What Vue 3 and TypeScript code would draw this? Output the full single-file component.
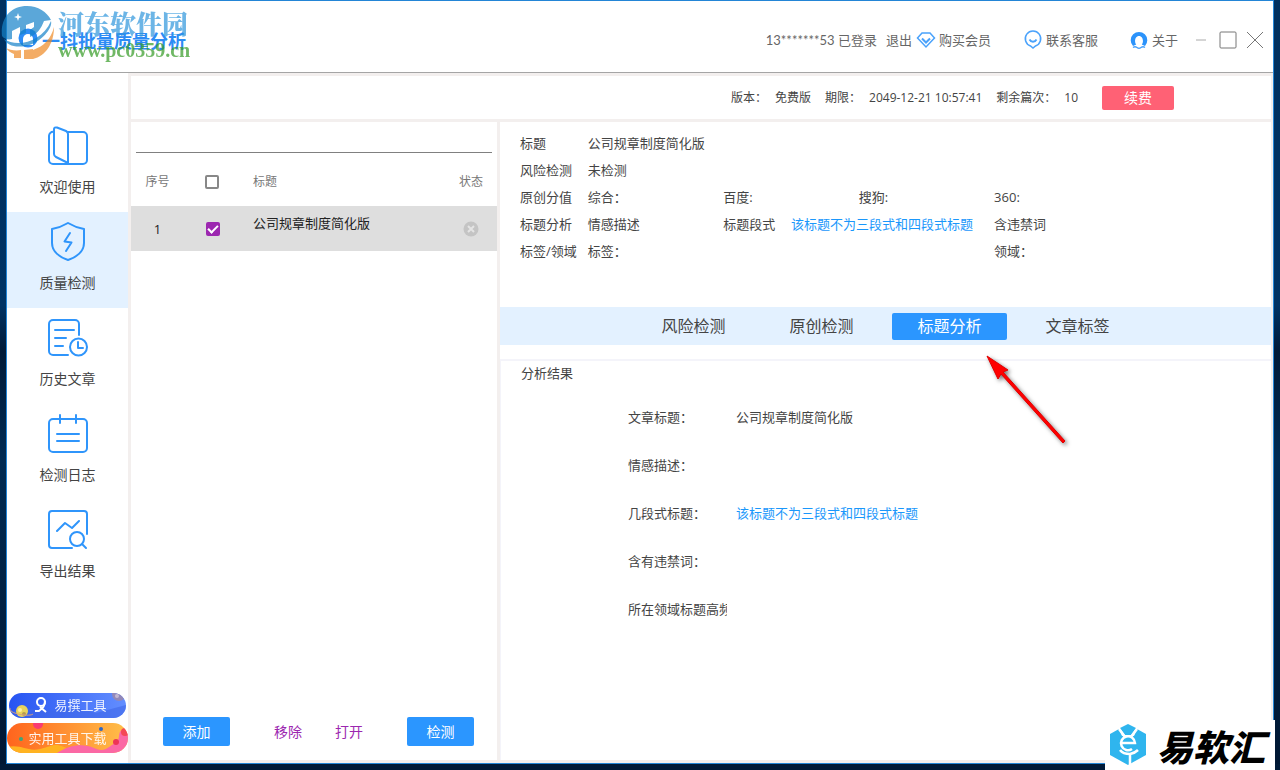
<script setup lang="ts">
import { ref } from 'vue'

interface NavItem { id: string; label: string }
interface Article { id: number; title: string; checked: boolean }
interface Field { text: string; col: number; span: number; row: number; accent?: boolean }
interface Result { label: string; value: string; accent?: boolean }

const nav: NavItem[] = [
  { id: 'welcome', label: '欢迎使用' },
  { id: 'quality', label: '质量检测' },
  { id: 'history', label: '历史文章' },
  { id: 'log', label: '检测日志' },
  { id: 'export', label: '导出结果' },
]
const activeNav = ref('quality')

const keyword = ref('')
const allChecked = ref(false)
const articles = ref<Article[]>([{ id: 1, title: '公司规章制度简化版', checked: true }])

const fields: Field[] = [
  { row: 1, col: 1, span: 1, text: '标题' },
  { row: 1, col: 2, span: 4, text: '公司规章制度简化版' },
  { row: 2, col: 1, span: 1, text: '风险检测' },
  { row: 2, col: 2, span: 4, text: '未检测' },
  { row: 3, col: 1, span: 1, text: '原创分值' },
  { row: 3, col: 2, span: 2, text: '综合：' },
  { row: 3, col: 4, span: 2, text: '百度:' },
  { row: 3, col: 6, span: 2, text: '搜狗:' },
  { row: 3, col: 8, span: 2, text: '360:' },
  { row: 4, col: 1, span: 1, text: '标题分析' },
  { row: 4, col: 2, span: 2, text: '情感描述' },
  { row: 4, col: 4, span: 1, text: '标题段式' },
  { row: 4, col: 5, span: 3, text: '该标题不为三段式和四段式标题', accent: true },
  { row: 4, col: 8, span: 2, text: '含违禁词' },
  { row: 5, col: 1, span: 1, text: '标签/领域' },
  { row: 5, col: 2, span: 2, text: '标签：' },
  { row: 5, col: 8, span: 2, text: '领域：' },
]

const tabs = ['风险检测', '原创检测', '标题分析', '文章标签']
const activeTab = ref('标题分析')

const results: Result[] = [
  { label: '文章标题：', value: '公司规章制度简化版' },
  { label: '情感描述：', value: '' },
  { label: '几段式标题：', value: '该标题不为三段式和四段式标题', accent: true },
  { label: '含有违禁词：', value: '' },
  { label: '所在领域标题高频词：', value: '' },
]
</script>

<template>
  <div class="desktop">
    <div class="window">
      <header class="titlebar">
        <div class="brand">
          <svg class="brand-face" viewBox="0 0 22 22" aria-hidden="true">
            <circle cx="11" cy="10" r="9.5" fill="#2d8cf5" />
            <path d="M6 17v-6a5 5 0 0 1 10 0v6z" fill="#fff" />
          </svg>
          <span class="brand-name">一抖批量质量分析</span>
          <div class="watermark">
            <svg class="wm-logo" viewBox="0 0 54 54" aria-hidden="true">
              <path d="M1 30C-1 12 10 0 26 0c11 0 20 6 24 14l-7 1c-3 8-7 13-14 16v-7l4-3V16l-8 3v8l-6 2v-8l-8 4v8C7 34 3 33 1 30z" fill="#1683c9" />
              <path d="M3 33c13 9 38 3 47-18 2 7-10 22-25 25C13 42 6 39 3 33z" fill="#1683c9" />
              <path d="M53 21c1 15-8 27-21 31v-9l-9 1v9h9c13-3 21-16 21-32zM53 21c-3 12-10 19-21 23v8c12-3 22-15 21-31zM5 42c3 2 10 3 15 2v8h-7v-4c-3-1-6-3-8-6z" fill="#ee8a25" />
              <path d="M17 7l1 3 3 1-3 1-1 3-1-3-3-1 3-1z" fill="#fff" />
            </svg>
            <span class="wm-cn">河东软件园</span>
            <span class="wm-url">www.pc0359.cn</span>
          </div>
        </div>
        <nav class="account">
          <span class="user">13*******53 已登录</span>
          <a href="#" class="logout">退出</a>
          <a href="#" class="link buy">
            <svg viewBox="0 0 20 20" aria-hidden="true"><path d="M6 3h8l4.500 5L10 17 1.500 8z" /><path d="M6 8.500l4 4 4-4" stroke-width="2" /></svg>
            购买会员
          </a>
          <a href="#" class="link service">
            <svg viewBox="0 0 20 20" aria-hidden="true"><path d="M7.500 16A7.700 7.700 0 1 1 12.500 16L10 18z" /><path d="M6.500 9.500c1.500 3 5.500 3 7 0" stroke-width="1.800" /></svg>
            联系客服
          </a>
          <a href="#" class="link about">
            <svg viewBox="0 0 20 20" aria-hidden="true"><path d="M4 16A8.300 8.300 0 1 1 16 16L12.800 14.500C15 12 14 6 10 6S5 12 7.200 14.500z" fill="#2b93fb" stroke="none" /><path d="M4 17.500q2-1.500 4 0t4 0 4 0" /></svg>
            关于
          </a>
        </nav>
        <div class="controls">
          <button type="button" class="ctl" aria-label="最小化"><svg viewBox="0 0 18 18"><path d="M4 9h10" stroke="#aaa" /></svg></button>
          <button type="button" class="ctl" aria-label="最大化"><svg viewBox="0 0 18 18"><rect x="1" y="1" width="16" height="16" rx="1" /></svg></button>
          <button type="button" class="ctl" aria-label="关闭"><svg viewBox="0 0 18 18"><path d="M1 1l16 16M17 1L1 17" /></svg></button>
        </div>
      </header>

      <div class="body">
        <aside class="sidebar">
          <nav class="nav">
            <button
              v-for="item in nav"
              :key="item.id"
              type="button"
              class="nav-item"
              :class="{ active: item.id === activeNav }"
              @click="activeNav = item.id"
            >
              <svg viewBox="0 0 40 40" aria-hidden="true">
                <template v-if="item.id === 'welcome'">
                  <path d="M20 6h15a4 4 0 0 1 4 4v24a4 4 0 0 1-4 4H5a4 4 0 0 1-4-4V10a4 4 0 0 1 5-4" />
                  <path d="M6 3q0-2 3-1.500L18 5q2 1 2 3v29L8 31q-2-1-2-3z" />
                </template>
                <template v-else-if="item.id === 'quality'">
                  <path d="M20 1c5 3 10 5 16 6v14c0 8-7 14-16 17C11 35 4 29 4 21V7c6-1 11-3 16-6z" />
                  <path d="M22 11l-5.500 8.500 7 1L18 29" />
                </template>
                <template v-else-if="item.id === 'history'">
                  <path d="M20 37H5a4 4 0 0 1-4-4V6a4 4 0 0 1 4-4h22a4 4 0 0 1 4 4v11M7 12h19M7 20h11M7 28h8" />
                  <circle cx="30.500" cy="29" r="8.500" /><path d="M30 24v6h5" />
                </template>
                <template v-else-if="item.id === 'log'">
                  <rect x="1" y="5" width="38" height="33" rx="4" /><path d="M12 1v8M28 1v8M9 20h22M9 27h22" />
                </template>
                <template v-else>
                  <path d="M24 38H4a3 3 0 0 1-3-3V4a3 3 0 0 1 3-3h32a3 3 0 0 1 3 3v20M9 21l8-8 7 5 7-7" />
                  <circle cx="29" cy="29" r="7" /><path d="M34 34l4 4" />
                </template>
              </svg>
              <span>{{ item.label }}</span>
            </button>
          </nav>
          <div class="promos">
            <a href="#" class="promo blue">
              <svg viewBox="0 0 117 25" preserveAspectRatio="none" aria-hidden="true">
                <defs><linearGradient id="pb"><stop offset="0" stop-color="#2754f2" /><stop offset="1" stop-color="#638eff" /></linearGradient></defs>
                <rect width="117" height="25" fill="url(#pb)" />
                <path d="M0 20c20-10 34 0 49-3s25-1 38 3l30-8v13H0z" fill="#3f68e8" opacity=".6" />
                <circle cx="13" cy="18" r="6" fill="#e8d35c" /><circle cx="11" cy="17" r="2" fill="#fff0a0" /><circle cx="15" cy="21" r="2" fill="#b59b52" />
                <path d="M1 15c-2 6 20 9 23 6" fill="none" stroke="#d8a37c" />
                <circle cx="110" cy="1" r="7" fill="#9288b8" /><circle cx="108" cy="3" r="2" fill="#c3b7d2" />
                <g fill="none" stroke="#fff" stroke-width="2"><circle cx="32" cy="9" r="4" /><path d="M36 8c0 5-2 7-6 10h-4M31 14l6 5" /></g>
              </svg>
              <span>易撰工具</span>
            </a>
            <a href="#" class="promo orange">
              <svg viewBox="0 0 121 30" preserveAspectRatio="none" aria-hidden="true">
                <defs><linearGradient id="po"><stop offset="0" stop-color="#ff641d" /><stop offset="1" stop-color="#ffc04a" /></linearGradient></defs>
                <rect width="121" height="30" fill="url(#po)" />
                <path d="M0 24c15-3 20 5 33 2s14-6 24-2 22 4 30 1v5H0z" fill="#ffb321" />
                <path d="M50 30c12-8 26-10 37-5s14-1 21-5 1-10 8-14l5 4v20z" fill="#fb68a4" />
                <circle cx="31" cy="1" r="5" fill="#f93c73" /><circle cx="14" cy="16" r="2" fill="#3aa67b" />
                <circle cx="94" cy="6" r="2" fill="#3267c1" /><circle cx="109" cy="19" r="3" fill="#ee3457" /><circle cx="118" cy="9" r="4" fill="#f44855" />
              </svg>
              <span>实用工具下载</span>
            </a>
          </div>
        </aside>

        <main class="main">
          <section class="license">
            <span>版本：</span><span class="val">免费版</span>
            <span class="key">期限：</span><span class="val">2049-12-21 10:57:41</span>
            <span class="key">剩余篇次：</span><span class="val">10</span>
            <button type="button" class="renew">续费</button>
          </section>

          <section class="list">
            <input v-model="keyword" class="search" type="text" aria-label="搜索" />
            <table>
              <colgroup><col class="c-no" /><col class="c-check" /><col /><col class="c-state" /></colgroup>
              <thead>
                <tr>
                  <th>序号</th>
                  <th><input v-model="allChecked" type="checkbox" aria-label="全选" /></th>
                  <th class="left">标题</th>
                  <th>状态</th>
                </tr>
              </thead>
              <tbody>
                <tr v-for="a in articles" :key="a.id">
                  <td>{{ a.id }}</td>
                  <td class="pick"><input v-model="a.checked" type="checkbox" :aria-label="a.title" /></td>
                  <td class="left name">{{ a.title }}</td>
                  <td>
                    <button type="button" class="state" aria-label="删除">
                      <svg viewBox="0 0 16 16"><circle cx="8" cy="8" r="7.500" fill="#c4c4c4" /><path d="M5 5l6 6M11 5l-6 6" stroke="#e4e4e4" stroke-width="2" /></svg>
                    </button>
                  </td>
                </tr>
              </tbody>
            </table>
            <div class="actions">
              <button type="button" class="primary">添加</button>
              <button type="button" class="flat first">移除</button>
              <button type="button" class="flat">打开</button>
              <button type="button" class="primary last">检测</button>
            </div>
          </section>

          <section class="detail">
            <div class="fields">
              <span
                v-for="f in fields"
                :key="f.text + f.row"
                :class="{ accent: f.accent }"
                :style="{ gridRow: f.row, gridColumn: `${f.col} / span ${f.span}` }"
              >{{ f.text }}</span>
            </div>
            <div class="tabs" role="tablist">
              <button
                v-for="t in tabs"
                :key="t"
                type="button"
                role="tab"
                :aria-selected="t === activeTab"
                :class="{ on: t === activeTab }"
                @click="activeTab = t"
              >{{ t }}</button>
            </div>
            <div class="results">
              <h2>分析结果</h2>
              <dl>
                <div v-for="r in results" :key="r.label">
                  <dt>{{ r.label }}</dt>
                  <dd :class="{ accent: r.accent }">{{ r.value }}</dd>
                </div>
              </dl>
              <svg class="arrow" viewBox="0 0 90 100" aria-hidden="true">
                <path d="M4 5l21 14-5 2 62 69-2 2-62-69-3 5z" fill="#f00" stroke="#e00000" stroke-width="1" />
              </svg>
            </div>
          </section>
        </main>
      </div>
    </div>

    <div class="stamp">
      <svg viewBox="0 0 38 42" aria-hidden="true">
        <path d="M19 0l18 10v21L19 41 1 31V10z" fill="#2fb5ee" />
        <path d="M8 0h22l-5 12H13z" fill="#fff" />
        <path d="M19 0l8 4-5 7h-6l-5-7z" fill="#2fb5ee" />
        <g fill="none" stroke="#fff" stroke-width="2.500">
          <path d="M10 5l6 8M28 5l-6 8" />
          <path d="M12 19h14a7 7 0 1 0-3 6" />
          <path d="M11 26q3 4 10 4 5-1 8-4M21 29v13" />
        </g>
      </svg>
      <span>易软汇</span>
    </div>
  </div>
</template>

<style>
body { margin: 0; }
</style>

<style scoped>
* { box-sizing: border-box; }
button { font: inherit; color: inherit; border: 0; padding: 0; background: none; cursor: pointer; }
a { color: inherit; text-decoration: none; }
svg { display: block; }

.desktop {
  position: relative;
  display: flex;
  min-height: 100vh;
  padding: 0 6px;
  border-bottom: 6px solid #001a38;
  background: linear-gradient(#00305f 0, #003263 40%, #001a38 46%, #002a52 60%, #001733 100%);
  font: 13px/20px "Open Sans", "Noto Sans CJK SC", sans-serif;
  color: #444;
}
.window {
  flex: 1;
  min-width: 0;
  display: flex;
  flex-direction: column;
  border: 1px solid #2385d6;
  background: #fff;
}

.titlebar {
  display: flex;
  align-items: center;
  height: 72px;
  padding: 6px 9px 0 0;
  border-bottom: 1px solid #a5a5a5;
  color: #666;
}
.brand { position: relative; align-self: stretch; flex: 1; }
.brand-face { position: absolute; left: 10px; top: 21px; width: 22px; }
.brand-name {
  position: absolute; left: 35px; top: 20px;
  font: 700 18px/26px "Noto Sans CJK SC", sans-serif;
  color: #2d8cf5; white-space: nowrap;
}
.watermark { position: absolute; left: -6px; top: -1px; opacity: .7; }
.wm-logo { width: 54px; height: 54px; }
.wm-cn, .wm-url { position: absolute; left: 57px; white-space: nowrap; }
.wm-cn { top: 0; font: 900 26px/34px "Noto Serif CJK SC", "Noto Sans CJK SC", serif; color: #2f96dc; }
.wm-url { top: 32px; font: 700 20px/24px "Liberation Serif", serif; color: #359b25; }

.account { display: flex; align-items: center; white-space: nowrap; }
.user { font-family: Lato, "Noto Sans CJK SC", sans-serif; }
.logout { margin-left: 9px; }
.link { display: flex; align-items: center; gap: 3px; }
.link svg { width: 20px; height: 20px; fill: none; stroke: #4aa2fb; stroke-width: 1.500; }
.buy { margin-left: 4px; }
.service { margin-left: 32px; }
.about { margin-left: 31px; }
.controls { display: flex; align-items: center; gap: 9px; margin-left: 14px; }
.ctl svg { width: 18px; height: 18px; fill: none; stroke: #777; stroke-width: 1; }

.body { flex: 1; display: flex; background: #f3efee; }
.sidebar {
  flex: 0 0 121px;
  display: flex;
  flex-direction: column;
  justify-content: space-between;
  padding: 43px 0 10px;
  background: #fff;
}
.nav { display: flex; flex-direction: column; }
.nav-item {
  display: flex;
  flex-direction: column;
  align-items: center;
  gap: 11px;
  height: 96px;
  padding-top: 10px;
  font-size: 14px;
}
.nav-item.active { background: #e3f1ff; }
.nav-item svg {
  width: 40px; height: 40px;
  fill: none; stroke: #2f95fb; stroke-width: 2; stroke-linecap: round; stroke-linejoin: round;
}
.promos { display: flex; flex-direction: column; gap: 5px; }
.promo {
  position: relative;
  display: flex;
  align-items: center;
  justify-content: center;
  border-radius: 15px;
  overflow: hidden;
  color: #fff;
  line-height: 18px;
}
.promo svg { position: absolute; inset: 0; width: 100%; height: 100%; }
.promo span { position: relative; opacity: .9; }
.promo.blue { height: 25px; margin: 0 2px; padding: 0 0 2px 26px; }
.promo.orange { height: 30px; }

.main {
  flex: 1;
  min-width: 0;
  display: grid;
  grid-template: 43px 1fr / 366px 1fr;
  gap: 3px;
  padding: 3px 2px 3px 3px;
}
.main > section { background: #fff; }
.license {
  grid-column: 1 / -1;
  display: flex;
  align-items: center;
  justify-content: flex-end;
  padding-right: 97px;
  font-size: 12px;
  white-space: nowrap;
}
.val { margin-left: 8px; }
.key { margin-left: 14px; }
.renew {
  width: 72px; height: 24px; margin-left: 24px;
  border-radius: 2px; background: #ff6175; color: #fff; font-size: 14px;
}

.list { display: flex; flex-direction: column; }
.search { height: 31px; margin: 0 5px; border: 0; border-bottom: 1px solid #808080; background: none; outline: 0; }
table { width: 100%; margin-top: 5px; border-collapse: collapse; table-layout: fixed; text-align: center; }
.c-no { width: 53px; }
.c-check { width: 55px; }
.c-state { width: 52px; }
th { height: 48px; padding: 0; font-size: 12px; font-weight: 400; color: #777; }
td { height: 45px; padding: 0; background: #dedede; color: #222; }
th.left, td.left { text-align: left; padding-left: 14px; }
td.name { padding-bottom: 12px; }
td.pick { padding-left: 3px; }
input[type="checkbox"] {
  appearance: none;
  display: block;
  width: 14px; height: 14px; margin: 0 auto;
  border: 2px solid #888; border-radius: 2px;
}
input[type="checkbox"]:checked { background: #9c27b0; border-color: #9c27b0; }
input[type="checkbox"]:checked::before {
  content: ""; display: block;
  box-sizing: border-box;
  width: 10px; height: 6px; margin-top: 1px;
  border: solid #fff; border-width: 0 0 2px 2px;
  transform: rotate(-45deg);
}
.state svg { width: 16px; height: 16px; }
td .state { display: block; margin: 0 auto; }
.actions { display: flex; align-items: center; margin-top: auto; padding: 0 23px 14px 32px; font-size: 14px; }
.primary { width: 67px; height: 29px; border-radius: 2px; background: #2b96ff; color: #fff; }
.flat { margin-left: 33px; color: #9c27b0; }
.flat.first { margin-left: 44px; }
.last { margin-left: auto; }

.detail { display: flex; flex-direction: column; min-width: 0; }
.fields {
  display: grid;
  grid-template-columns: repeat(11, minmax(0, 1fr));
  grid-auto-rows: 27px;
  align-items: center;
  height: 185px;
  align-content: start;
  padding: 7px 6px 0 20px;
  white-space: nowrap;
}
.accent { color: #1a97fb; }
.tabs { display: flex; align-items: center; justify-content: center; gap: 13px; height: 38px; background: #e3f1ff; }
.tabs button { width: 115px; height: 27px; border-radius: 2px; font-size: 16px; }
.tabs .on { background: #2b96ff; color: #fff; }
.results { position: relative; flex: 1; margin-top: 14px; padding-left: 20px; border: solid #f4f4fa; border-width: 2px 0 0 1px; }
h2 { margin: 2px 0 0; font-size: 13px; line-height: 20px; font-weight: 400; }
dl { margin: 10px 0 0 107px; }
dl div { display: flex; align-items: center; height: 48px; gap: 9px; white-space: nowrap; }
dt { width: 99px; overflow: hidden; }
dd { margin: 0; }
.arrow { position: absolute; left: 482px; top: -10px; width: 90px; height: 100px; filter: drop-shadow(2px 2px 2px #777); }

.stamp {
  position: absolute;
  right: 5px; bottom: -6px;
  display: flex;
  align-items: center;
  gap: 10px;
  width: 170px; height: 50px;
  padding-left: 4px;
  background: #fff;
  color: #000;
}
.stamp svg { width: 38px; height: 42px; }
.stamp span { font: italic 900 36px/46px "Noto Sans CJK SC", sans-serif; white-space: nowrap; }
</style>
